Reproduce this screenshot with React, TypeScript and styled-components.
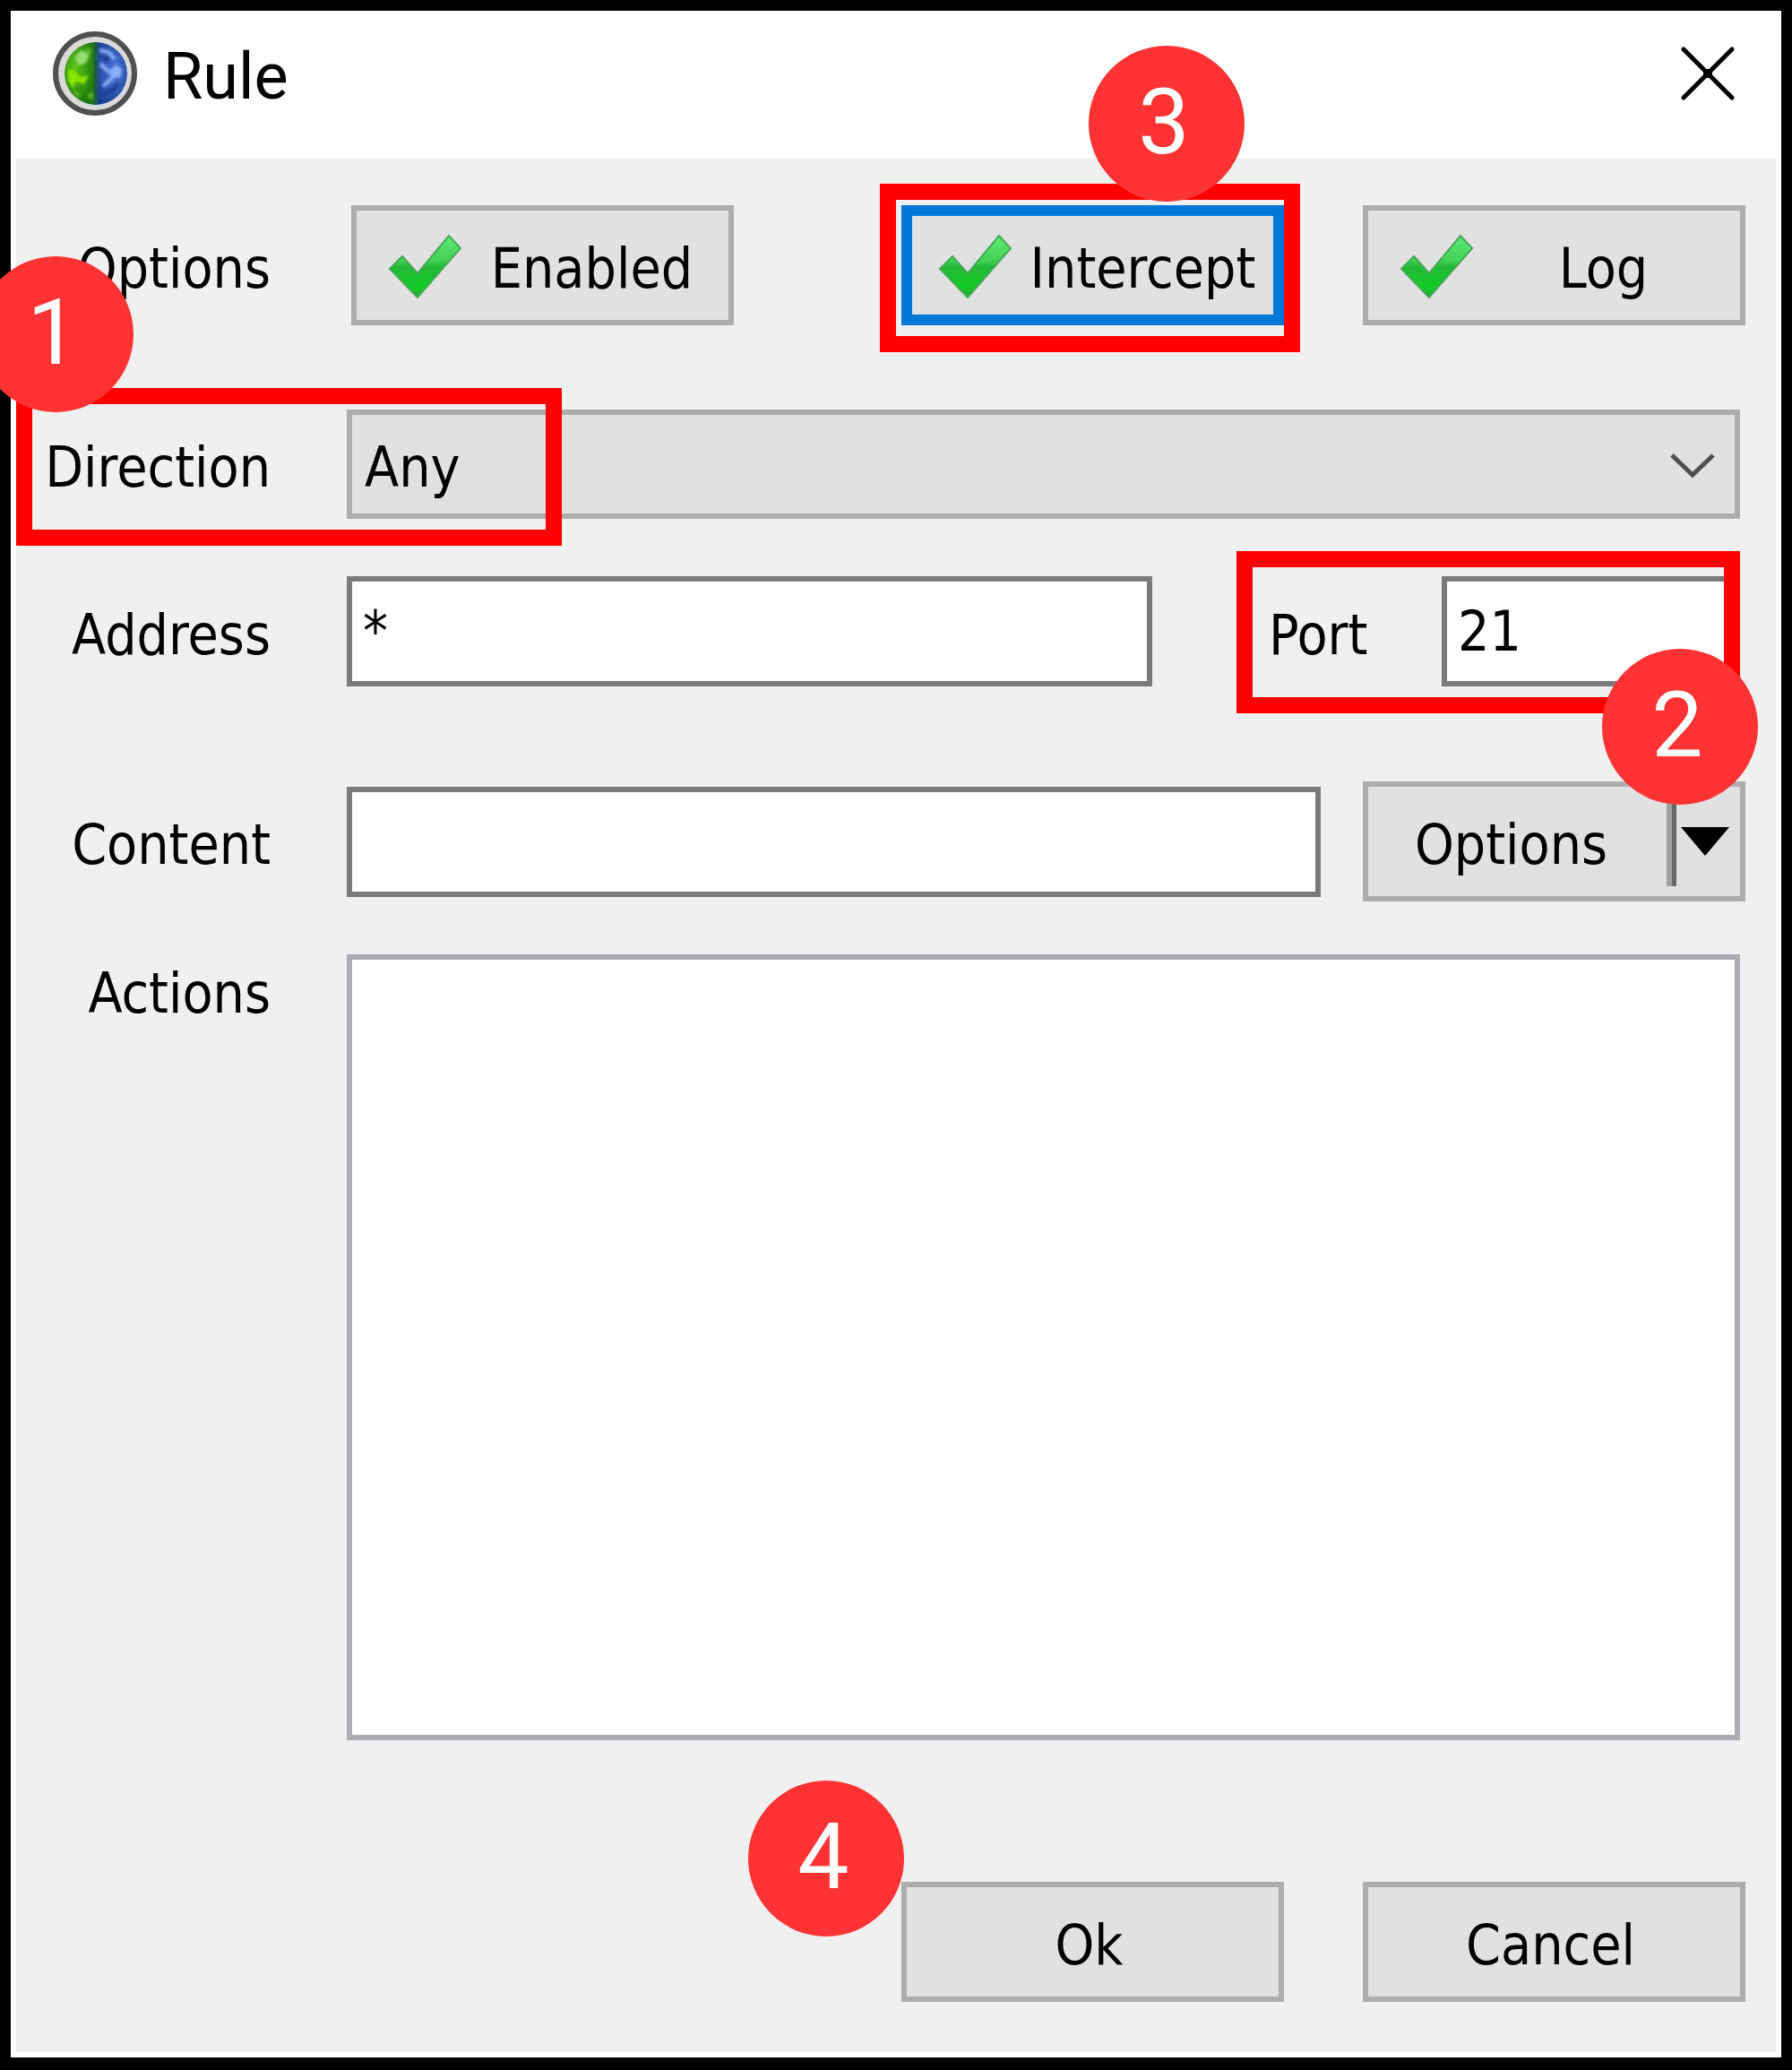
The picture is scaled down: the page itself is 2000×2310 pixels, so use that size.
import React from 'react';
import styled, { createGlobalStyle } from 'styled-components';

const uiFont = '"DejaVu Sans Condensed", "DejaVu Sans", sans-serif';
const titleFont = 'Roboto, "Open Sans", sans-serif';

const GlobalStyle = createGlobalStyle`
  *, *::before, *::after { box-sizing: border-box; }
  body {
    margin: 0;
    background: #000;
    color: #000;
    font-family: ${uiFont};
    font-size: 62px;
    line-height: 72px;
  }
  button, input, select, textarea {
    margin: 0;
    padding: 0;
    border-radius: 0;
    font: inherit;
    color: inherit;
    outline: none;
  }
`;

const Window = styled.main`
  display: flex;
  flex-direction: column;
  min-height: 100vh;
  border: 12px solid #000;
  border-bottom-width: 14px;
`;

const TitleBar = styled.header`
  display: flex;
  align-items: center;
  height: 165px;
  padding: 0 42px 26px 46px;
  background: #fff;
`;

const Title = styled.h1`
  flex: 1;
  margin: 0;
  padding: 8px 0 0 28px;
  font-family: ${titleFont};
  font-size: 72px;
  font-weight: 400;
  line-height: 82px;
`;

const CloseButton = styled.button`
  display: flex;
  padding: 10px;
  border: 0;
  background: transparent;
`;

const Body = styled.form`
  flex: 1;
  display: flex;
  flex-direction: column;
  padding: 52px 34px 56px 0;
  border: 6px solid #fff;
  border-top: 0;
  background: #f0f0f0;
`;

const Row = styled.div<{ $gap: number; $grow?: boolean }>`
  position: relative;
  display: grid;
  grid-template-columns: 284px minmax(0, 1fr);
  column-gap: 85px;
  align-items: ${p => (p.$grow ? 'stretch' : 'center')};
  flex: ${p => (p.$grow ? '1 0 auto' : '0 0 auto')};
  margin-top: ${p => p.$gap}px;
`;

const Label = styled.label`
  padding-top: 8px;
  text-align: right;
  white-space: nowrap;
`;

const ButtonStrip = styled.div`
  display: flex;
  justify-content: flex-end;
  gap: 88px;
  padding-left: 5px;
`;

const FieldStrip = styled.div`
  display: flex;
  align-items: center;
  padding-right: 6px;
`;

const PushButton = styled.button<{ $focused?: boolean }>`
  display: flex;
  align-items: center;
  width: 427px;
  height: 134px;
  border: ${p => (p.$focused ? '12px solid #0078d7' : '6px solid #adadad')};
  padding: ${p => (p.$focused ? '0 0 0 29px' : '0 8px 0 35px')};
  background: #e1e1e1;
`;

const PlainButton = styled(PushButton)`
  padding-left: 0;
`;

const Caption = styled.span`
  flex: 1;
  padding-top: 8px;
  text-align: center;
`;

const Start = styled.div`
  flex: 1;
`;

const Anchor = styled.div`
  position: relative;
`;

const TextInput = styled.input`
  flex: 1;
  min-width: 0;
  width: 100%;
  height: 123px;
  padding: 0 12px;
  border: 6px solid #7a7a7a;
  background: #fff;
`;

const ActionList = styled.textarea`
  display: block;
  width: 100%;
  height: 100%;
  min-height: 400px;
  border: 6px solid #abadb3;
  background: #fff;
  resize: none;
`;

const ListHolder = styled.div`
  padding-right: 6px;
`;

const SelectBox = styled.div`
  position: relative;
  flex: 1;
`;

const Select = styled.select`
  display: block;
  width: 100%;
  height: 122px;
  padding: 8px 100px 0 14px;
  border: 6px solid #adadad;
  background: #e1e1e1;
  appearance: none;
`;

const Chevron = styled.svg`
  position: absolute;
  right: 28px;
  top: 48px;
  pointer-events: none;
`;

const PortGroup = styled.div`
  position: relative;
  display: flex;
  align-items: center;
  width: 562px;
  margin-left: 94px;
  padding-left: 36px;
`;

const PortLabel = styled.label`
  width: 193px;
  padding-top: 8px;
`;

const ContentStrip = styled.div`
  display: flex;
  align-items: center;
  gap: 47px;
`;

const SplitButton = styled.div`
  display: flex;
  align-items: center;
  width: 427px;
  height: 134px;
  border: 6px solid #adadad;
  background: #e1e1e1;
`;

const SplitMain = styled.button`
  flex: 1;
  height: 100px;
  padding: 8px 14px 0 0;
  border: 0;
  border-right: 6px solid #a0a0a0;
  background: transparent;
`;

const SplitArrow = styled.button`
  display: flex;
  align-items: center;
  width: 76px;
  height: 100px;
  padding-left: 5px;
  border: 0;
  border-left: 5px solid #696969;
  background: transparent;
`;

const Highlight = styled.div<{ $inset: string; $width?: number }>`
  position: absolute;
  inset: ${p => p.$inset};
  width: ${p => (p.$width ? `${p.$width}px` : 'auto')};
  border: 18px solid #f00;
  pointer-events: none;
`;

const Badge = styled.span<{ $inset: string }>`
  position: absolute;
  inset: ${p => p.$inset};
  z-index: 2;
  display: flex;
  align-items: center;
  justify-content: center;
  width: 174px;
  height: 174px;
  padding: 0 6px 4px 0;
  border-radius: 50%;
  background: #f33;
  color: #fff;
  font-family: ${titleFont};
  font-size: 102px;
  font-weight: 400;
  line-height: 120px;
  pointer-events: none;
`;

function GlobeIcon() {
  return (
    <svg width="96" height="96" viewBox="0 0 96 96" aria-hidden="true">
      <defs>
        <radialGradient id="land" cx="0.35" cy="0.4" r="0.7">
          <stop offset="0" stopColor="#5cc51a" />
          <stop offset="1" stopColor="#17700a" />
        </radialGradient>
        <radialGradient id="sea" cx="0.6" cy="0.45" r="0.7">
          <stop offset="0" stopColor="#4a76d8" />
          <stop offset="1" stopColor="#173c8c" />
        </radialGradient>
        <filter id="soft"><feGaussianBlur stdDeviation="1.5" /></filter>
      </defs>
      <circle cx="48" cy="48" r="44" fill="#d9d9d9" stroke="#505050" strokeWidth="6" />
      <path d="M49 13 A35 35 0 0 0 49 83 Z" fill="url(#land)" />
      <path d="M49 13 A35 35 0 0 1 49 83 Z" fill="url(#sea)" />
      <g filter="url(#soft)">
        <path d="M25 30l8-8 9 5-4 9-8 3z" fill="#96e070" />
        <path d="M18 43l7 2 7 7 9-2-5 10-9-3-4 8-5-10z" fill="#84e800" />
        <path d="M39 18l5 4-1 5-6-4zM25 67l5 2 1 6-6-4zM41 70l5-2v9l-6-2z" fill="#5cb62c" />
        <path d="M53 22l10 2 7 8M54 37l8 8 7 3M57 62l9-8 6-8" stroke="#8fb0f8" strokeWidth="4" fill="none" />
        <path d="M63 46l9-8 6 5-1 9-9 1z" fill="#8cb0ff" />
        <path d="M57 70l9-2 8-8M64 31l-8 2" stroke="#1d3f98" strokeWidth="5" fill="none" />
      </g>
      <path d="M49 13v70" stroke="#1b5b50" strokeWidth="4" />
    </svg>
  );
}

function CheckIcon() {
  return (
    <svg width="83" height="74" viewBox="0 0 83 74" aria-hidden="true">
      <defs>
        <linearGradient id="check" x1="0" y1="0" x2="0" y2="1">
          <stop offset="0" stopColor="#5fe873" />
          <stop offset="0.4" stopColor="#42d356" />
          <stop offset="0.5" stopColor="#25b838" />
          <stop offset="0.85" stopColor="#12cc26" />
          <stop offset="1" stopColor="#2d9a3a" />
        </linearGradient>
      </defs>
      <path d="M2 41L16 27L33 46L68 4L81 18L33 73Z" fill="url(#check)" stroke="#47a857" strokeWidth="2" />
    </svg>
  );
}

interface ToggleProps {
  text: string;
  focused?: boolean;
}

function Toggle({ text, focused }: ToggleProps) {
  return (
    <PushButton type="button" aria-pressed="true" $focused={focused}>
      <CheckIcon />
      <Caption>{text}</Caption>
    </PushButton>
  );
}

export default function App() {
  return (
    <>
      <GlobalStyle />
      <Window>
        <TitleBar>
          <GlobeIcon />
          <Title>Rule</Title>
          <CloseButton type="button" aria-label="Close">
            <svg width="60" height="60" viewBox="0 0 60 60" aria-hidden="true">
              <path d="M3 3L57 57M57 3L3 57" stroke="#000" strokeWidth="5" strokeLinecap="round" />
              <rect x="25" y="25" width="10" height="10" />
            </svg>
          </CloseButton>
        </TitleBar>

        <Body onSubmit={e => e.preventDefault()}>
          <Row $gap={0} role="group" aria-labelledby="options-label">
            <Label as="span" id="options-label">Options</Label>
            <ButtonStrip>
              <Start>
                <Toggle text="Enabled" />
              </Start>
              <Anchor>
                <Toggle text="Intercept" focused />
                <Highlight $inset="-24px -18px -30px -24px" />
                <Badge $inset="-178px auto auto 209px">3</Badge>
              </Anchor>
              <Toggle text="Log" />
            </ButtonStrip>
          </Row>

          <Row $gap={94}>
            <Label htmlFor="direction">Direction</Label>
            <FieldStrip>
              <SelectBox>
                <Select id="direction" defaultValue="Any">
                  <option>Any</option>
                  <option>Incoming</option>
                  <option>Outgoing</option>
                </Select>
                <Chevron width="50" height="30" viewBox="0 0 50 30" aria-hidden="true">
                  <path d="M2 3L25 25L48 3" fill="none" stroke="#505050" strokeWidth="5" />
                </Chevron>
              </SelectBox>
            </FieldStrip>
            <Highlight $inset="-24px auto -30px 0" $width={609} />
            <Badge $inset="-171px auto auto -43px">1</Badge>
          </Row>

          <Row $gap={64}>
            <Label htmlFor="address">Address</Label>
            <FieldStrip>
              <TextInput id="address" defaultValue="*" />
              <PortGroup>
                <PortLabel htmlFor="port">Port</PortLabel>
                <TextInput id="port" defaultValue="21" />
                <Highlight $inset="-28px 0 -30px 0" />
                <Badge $inset="81px -20px auto auto">2</Badge>
              </PortGroup>
            </FieldStrip>
          </Row>

          <Row $gap={106}>
            <Label htmlFor="content">Content</Label>
            <ContentStrip>
              <TextInput id="content" />
              <SplitButton>
                <SplitMain type="button">Options</SplitMain>
                <SplitArrow type="button" aria-label="More options">
                  <svg width="54" height="32" viewBox="0 0 54 32" aria-hidden="true">
                    <path d="M0 0H54L27 32Z" />
                  </svg>
                </SplitArrow>
              </SplitButton>
            </ContentStrip>
          </Row>

          <Row $gap={59} $grow>
            <Label htmlFor="actions">Actions</Label>
            <ListHolder>
              <ActionList id="actions" />
            </ListHolder>
          </Row>

          <Row $gap={158}>
            <span />
            <ButtonStrip>
              <Anchor>
                <PlainButton type="submit">
                  <Caption>Ok</Caption>
                </PlainButton>
                <Badge $inset="-113px auto auto -171px">4</Badge>
              </Anchor>
              <PlainButton type="button">
                <Caption>Cancel</Caption>
              </PlainButton>
            </ButtonStrip>
          </Row>
        </Body>
      </Window>
    </>
  );
}
